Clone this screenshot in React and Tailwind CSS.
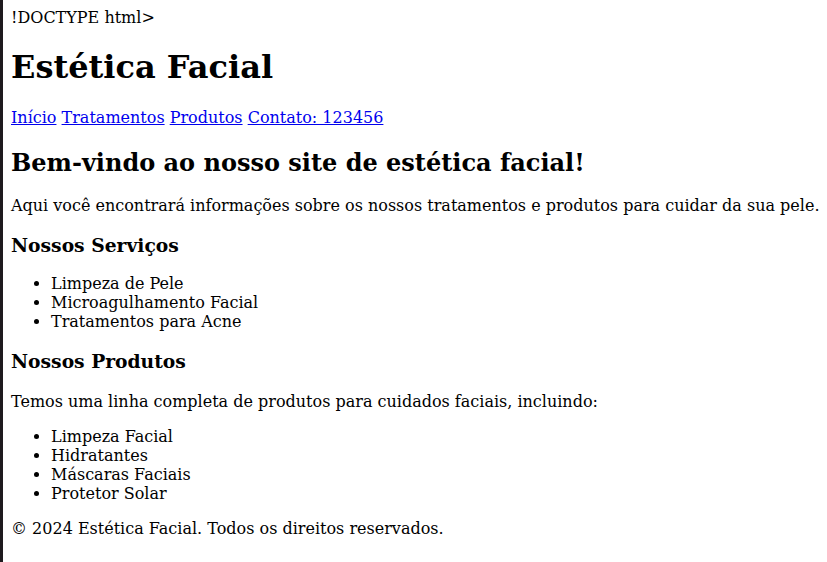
import React from 'react';

export default function App() {
  const servicos = ['Limpeza de Pele', 'Microagulhamento Facial', 'Tratamentos para Acne'];
  const produtos = ['Limpeza Facial', 'Hidratantes', 'Máscaras Faciais', 'Protetor Solar'];

  return (
    <div className="min-h-screen bg-white border-l-[3px] border-[#1e1a1e] pl-2 py-2 pr-0 text-black text-base leading-[normal] font-['DejaVu_Serif',serif]">
      {'!DOCTYPE html>'}
      <header>
        <h1 className="text-[32px] font-bold my-[21.44px]">Estética Facial</h1>
        <nav>
          <a href="#" className="text-[#0000ee] underline">Início</a>{' '}
          <a href="#" className="text-[#0000ee] underline">Tratamentos</a>{' '}
          <a href="#" className="text-[#0000ee] underline">Produtos</a>{' '}
          <a href="#" className="text-[#0000ee] underline">Contato: 123456</a>
        </nav>
      </header>

      <main>
        <h2 className="text-2xl font-bold mt-[19.92px] mb-[17px]">Bem-vindo ao nosso site de estética facial!</h2>
        <p className="my-4 whitespace-nowrap">Aqui você encontrará informações sobre os nossos tratamentos e produtos para cuidar da sua pele.</p>

        <h3 className="text-[18.72px] font-bold my-[18.72px]">Nossos Serviços</h3>
        <ul className="list-disc pl-10 my-4">
          {servicos.map(s => <li key={s}>{s}</li>)}
        </ul>

        <h3 className="text-[18.72px] font-bold mt-[18.72px] mb-[20.5px]">Nossos Produtos</h3>
        <p className="my-4">Temos uma linha completa de produtos para cuidados faciais, incluindo:</p>
        <ul className="list-disc pl-10 my-4">
          {produtos.map(p => <li key={p}>{p}</li>)}
        </ul>
      </main>

      <footer>
        <p className="my-4">© 2024 Estética Facial. Todos os direitos reservados.</p>
      </footer>
    </div>
  );
}
